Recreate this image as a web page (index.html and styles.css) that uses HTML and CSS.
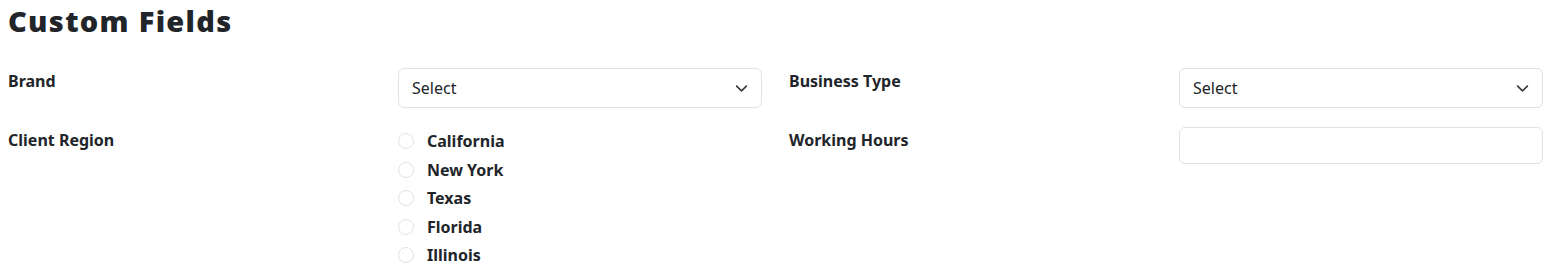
FILE: index.html
```html
<!DOCTYPE html>
<html>
<head>
<meta charset="utf-8">
<link rel="stylesheet" href="styles.css">
</head>
<body>
<h3 class="title">Custom Fields</h3>
<div class="grid">
  <div class="label">Brand</div>
  <div class="select"><span>Select</span><svg class="chev" viewBox="0 0 16 16" width="16" height="16"><path d="M2 5l6 6 6-6" fill="none" stroke="#343a40" stroke-width="2" stroke-linecap="round" stroke-linejoin="round"/></svg></div>
  <div class="label">Business Type</div>
  <div class="select"><span>Select</span><svg class="chev" viewBox="0 0 16 16" width="16" height="16"><path d="M2 5l6 6 6-6" fill="none" stroke="#343a40" stroke-width="2" stroke-linecap="round" stroke-linejoin="round"/></svg></div>

  <div class="label">Client Region</div>
  <div class="radios">
    <label class="radio"><span class="circle"></span>California</label>
    <label class="radio"><span class="circle"></span>New York</label>
    <label class="radio"><span class="circle"></span>Texas</label>
    <label class="radio"><span class="circle"></span>Florida</label>
    <label class="radio"><span class="circle"></span>Illinois</label>
  </div>
  <div class="label">Working Hours</div>
  <div class="input-wrap"><div class="input"></div></div>
</div>
</body>
</html>
```
FILE: styles.css
```css
html, body { margin: 0; padding: 0; background: #fff; }
body {
  font-family: "Noto Sans", "Open Sans", sans-serif;
  color: #212529;
  padding: 0 8px;
}
.title {
  font-family: "Open Sans", sans-serif;
  font-weight: 800;
  font-size: 29px;
  letter-spacing: 1.3px;
  line-height: 36px;
  margin: 3px 0 0 0;
  color: #212529;
}
.grid {
  display: grid;
  grid-template-columns: 390px 391px 390px 364px;
  row-gap: 19px;
  margin-top: 29px;
}
.label {
  font-weight: 700;
  font-size: 16px;
  line-height: 24px;
  padding-top: 1px;
}
.select {
  width: 364px;
  height: 40px;
  box-sizing: border-box;
  border: 1px solid #dee2e6;
  border-radius: 6px;
  display: flex;
  align-items: center;
  justify-content: space-between;
  padding: 0 13px 0 13px;
  font-size: 16px;
}
.chev { width: 13px; height: 13px; }
.input {
  width: 364px;
  height: 37px;
  box-sizing: border-box;
  border: 1px solid #dee2e6;
  border-radius: 6px;
}
.radios {
  display: flex;
  flex-direction: column;
}
.radio {
  display: flex;
  align-items: center;
  height: 28.5px;
  font-weight: 700;
  font-size: 16px;
}
.circle {
  width: 16px;
  height: 16px;
  box-sizing: border-box;
  border: 1px solid #dee2e6;
  border-radius: 50%;
  margin-right: 13px;
}
```
